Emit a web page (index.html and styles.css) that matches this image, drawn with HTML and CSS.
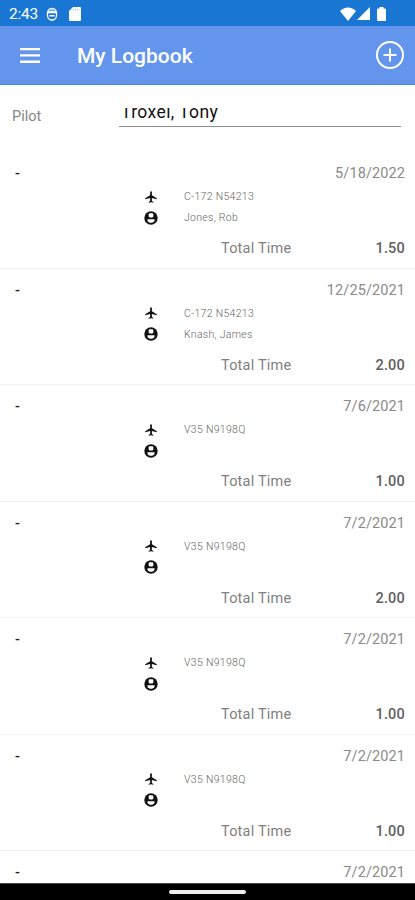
FILE: index.html
```html
<!DOCTYPE html>
<html lang="en">
<head>
    <meta charset="UTF-8">
    <meta name="viewport" content="width=device-width, initial-scale=1.0">
    <title>My Logbook</title>
    <link rel="stylesheet" href="styles.css">
</head>
<body>
    <svg class="symbols">
        <symbol id="plane" viewBox="0 0 24 24">
            <path d="M22 16v-2l-8.500-5V3.500C13.500 2.670 12.830 2 12 2s-1.500.67-1.500 1.500V9L2 14v2l8.500-2.500V19L8 20.500V22l4-1 4 1v-1.500L13.500 19v-5.500z"/>
        </symbol>
        <symbol id="person" viewBox="0 0 24 24">
            <circle cx="12" cy="12" r="11.500"/>
            <rect class="cutout" x="8" y="4" width="8" height="7" rx="2"/>
            <path class="cutout" d="M6 14h12v2.500c-1 2.500-3.500 3.500-6 3.500s-5-1-6-3.500z"/>
        </symbol>
    </svg>

    <div class="status">
        <span class="clock">2:43</span>
        <svg class="face" viewBox="0 0 12 14">
            <path d="M1.500 5.500h9v3a4.500 4.500 0 0 1-9 0z" fill="none" stroke="#fff" stroke-width="1.300"/>
            <path d="M1 5a5 4.300 0 0 1 10 0z" opacity=".85"/>
            <path d="M3.500 8h5v1.500h-5z"/>
            <path d="M3 3.200h6" stroke="#1976d2" stroke-width=".8"/>
        </svg>
        <svg class="card" viewBox="0 0 12 14"><path d="M4 0h7a1 1 0 0 1 1 1v12a1 1 0 0 1-1 1H1a1 1 0 0 1-1-1V4z"/><path d="M4.500 2v1.500M6.700 2v1.500M8.900 2v1.500" stroke="#1976d2" stroke-width=".4"/></svg>
        <div class="signals">
            <svg class="wifi" viewBox="0 0 16 14"><path d="M8 14 0 4Q3.500.5 8 .5T16 4z"/></svg>
            <svg class="cell" viewBox="0 0 13 13"><path d="M13 0v13H0z"/></svg>
            <svg class="battery" viewBox="0 0 9 14"><path d="M2.500 0h4v1.500H8a1 1 0 0 1 1 1V13a1 1 0 0 1-1 1H1a1 1 0 0 1-1-1V2.500a1 1 0 0 1 1-1h1.500z"/></svg>
        </div>
    </div>

    <div class="header">
        <svg class="menu" viewBox="0 0 20 15"><path d="M0 0h20v2.300H0zM0 6.300h20v2.300H0zM0 12.600h20v2.300H0z"/></svg>
        <h1>My Logbook</h1>
        <svg class="add" viewBox="0 0 28 28"><path d="M14 7.500v13M7.500 14h13"/><circle cx="14" cy="14" r="13"/></svg>
    </div>

    <div class="pilot">
        <label>Pilot</label>
        <div class="picker"><span>Troxel, Tony</span></div>
    </div>

    <div class="list" id="list"></div>

    <div class="navbar"><div class="pill"></div></div>

    <script>
        let flights = [
            { date: '5/18/2022', plane: 'C-172 N54213', person: 'Jones, Rob', total: '1.50' },
            { date: '12/25/2021', plane: 'C-172 N54213', person: 'Knash, James', total: '2.00' },
            { date: '7/6/2021', plane: 'V35 N9198Q', person: '', total: '1.00' },
            { date: '7/2/2021', plane: 'V35 N9198Q', person: '', total: '2.00' },
            { date: '7/2/2021', plane: 'V35 N9198Q', person: '', total: '1.00' },
            { date: '7/2/2021', plane: 'V35 N9198Q', person: '', total: '1.00' },
            { date: '7/2/2021' }
        ]
        let html = ''
        flights.forEach(flight => {
            html += `
            <div class="flight">
                <div class="top"><span class="route">-</span><span class="date">${flight.date}</span></div>`
            if(flight.total){
                html += `
                <div class="detail"><svg><use href="#plane"/></svg><span>${flight.plane}</span></div>
                <div class="detail"><svg><use href="#person"/></svg><span>${flight.person}</span></div>
                <div class="total"><span>Total Time</span><b>${flight.total}</b></div>`
            }
            html += '</div>'
        })
        document.getElementById('list').innerHTML = html
    </script>
</body>
</html>
```
FILE: styles.css
```css
*{
    box-sizing: border-box;
}
body{
    margin: 0;
    height: 900px;
    display: flex;
    flex-direction: column;
    overflow: hidden;
    background-color: #fff;
    font-family: Roboto, "Liberation Sans", sans-serif;
}
svg{
    display: block;
    flex: none;
    fill: #fff;
}
.symbols{
    position: absolute;
    width: 0;
    height: 0;
}
.status{
    height: 26px;
    flex: none;
    display: flex;
    align-items: center;
    padding: 1px 29px 0 9px;
    background-color: #1976d2;
    color: #fff;
}
.clock{
    width: 37px;
    font-size: 15.5px;
    line-height: 20px;
    font-weight: 400;
    letter-spacing: -0.2px;
}
.face{
    width: 12px;
    height: 14px;
}
.card{
    width: 12px;
    height: 14px;
    margin-left: 11px;
}
.signals{
    display: flex;
    align-items: center;
    margin-left: auto;
}
.wifi{
    width: 16px;
    height: 14px;
}
.cell{
    width: 13px;
    height: 13px;
    margin: 0 7px 0 1px;
}
.battery{
    width: 9px;
    height: 14px;
}
.header{
    height: 59px;
    flex: none;
    display: flex;
    align-items: center;
    padding: 0 11px 0 20px;
    background-color: #6495ed;
    border-bottom: 1px solid #4e83d6;
    color: #fff;
}
.menu{
    width: 20px;
    height: 15px;
}
h1{
    margin: 2px 0 0 37px;
    font-size: 21px;
    line-height: 28px;
    font-weight: 500;
}
.add{
    width: 28px;
    height: 28px;
    margin-left: auto;
    fill: none;
    stroke: #fff;
    stroke-width: 2;
}
.pilot{
    height: 67px;
    flex: none;
    display: flex;
    padding: 21px 14px 0 12px;
}
.pilot label{
    width: 107px;
    padding-top: 1px;
    font-size: 14.5px;
    line-height: 20px;
    color: #858585;
}
.picker{
    flex: 1;
    height: 21px;
    display: flex;
    align-items: flex-end;
    overflow: hidden;
    border-bottom: 1px solid #8c8c8c;
    padding: 0 0 4px 2px;
}
/* the field is shorter than its text, so the capitals lose their tops */
.picker span{
    height: 14px;
    display: flex;
    align-items: flex-end;
    overflow: hidden;
    font-size: 17.5px;
    line-height: 20px;
    letter-spacing: 0.4px;
    color: #111;
}
.list{
    flex: 1;
    min-height: 0;
    overflow: hidden;
}
.flight{
    height: 116.57px;
    padding: 11px 10px 0 15px;
    border-bottom: 1px solid #f2f2f2;
}
.flight:last-child{
    height: 36px;
    border-bottom: none;
}
.top{
    display: flex;
    justify-content: space-between;
    height: 23px;
    font-size: 14.5px;
    line-height: 22px;
}
.route{
    font-weight: 500;
    color: #222;
}
.date{
    letter-spacing: 0.1px;
    color: #8a8a8a;
}
.detail{
    height: 21px;
    display: flex;
    align-items: center;
    padding-left: 129px;
    font-size: 10.5px;
    font-weight: 300;
    letter-spacing: 0.3px;
    color: #666;
}
.detail svg{
    width: 14px;
    height: 14px;
    margin-right: 26px;
    fill: #111;
}
.detail .cutout{
    fill: #fff;
}
.cutout{
    fill: #fff;
}
.total{
    display: flex;
    justify-content: space-between;
    margin-top: 11px;
    padding-left: 206px;
    font-size: 14.5px;
    line-height: 20px;
    letter-spacing: 0.2px;
    color: #808080;
}
.total b{
    font-weight: 500;
    color: #606060;
}
.navbar{
    height: 17px;
    flex: none;
    display: flex;
    justify-content: center;
    align-items: center;
    background-color: #000;
    border-top: 1px solid #444;
}
.pill{
    width: 77px;
    height: 4px;
    border-radius: 2px;
    background-color: #eee;
}
```
